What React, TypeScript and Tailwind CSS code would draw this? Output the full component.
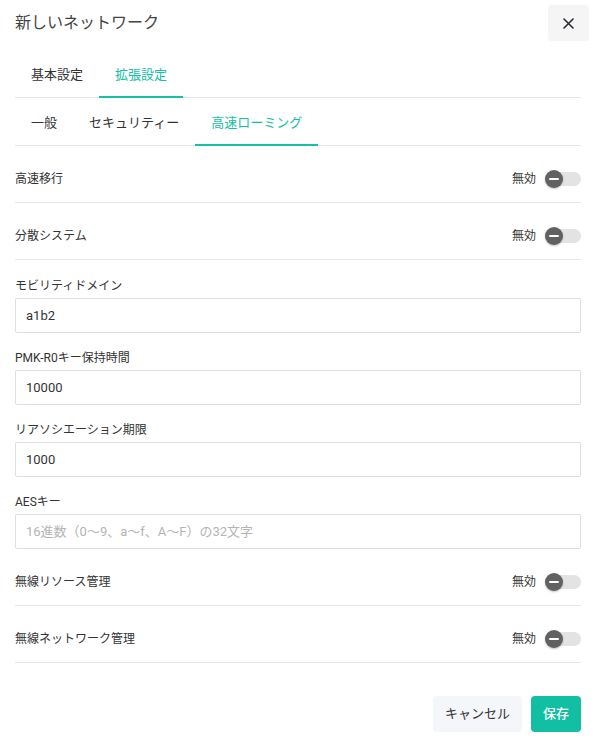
const FONT = { fontFamily: 'Roboto, "Noto Sans CJK JP", "Noto Sans", sans-serif' };

const TOP_TABS = ['基本設定', '拡張設定'];
const SUB_TABS = ['一般', 'セキュリティー', '高速ローミング'];

const Tabs = ({ items, active }: { items: string[]; active: number }) => (
  <div className="flex border-b border-[#e4e7ed]">
    {items.map((t, i) => (
      <div
        key={t}
        className={`-mb-px px-4 pt-[15px] pb-[11px] text-[13px] leading-[20px] border-b-2 ${
          i === active ? 'border-[#14c1a5] text-[#14c1a5]' : 'border-transparent text-[#333]'
        }`}
      >
        {t}
      </div>
    ))}
  </div>
);

const Toggle = () => (
  <div className="flex items-center gap-[9px]">
    <span className="text-[12px] text-[#333]">無効</span>
    <div className="relative w-[36px] h-[18px]">
      <div className="absolute left-[2px] right-0 top-[2px] h-[14px] rounded-full bg-[#e3e3e3]" />
      <div className="absolute left-0 top-0 w-[18px] h-[18px] rounded-full bg-[#616161] shadow-[0_1px_2px_rgba(0,0,0,0.25)] flex items-center justify-center">
        <div className="w-[10px] h-[2px] bg-white rounded-full" />
      </div>
    </div>
  </div>
);

const ToggleRow = ({ label }: { label: string }) => (
  <div className="flex items-center justify-between pt-[23px] pb-[13px] border-b border-[#e4e7ed]">
    <span className="text-[12px] leading-[20px] text-[#333]">{label}</span>
    <Toggle />
  </div>
);

const Field = ({ label, value, placeholder }: { label: string; value?: string; placeholder?: string }) => (
  <div className="mb-[17px]">
    <div className="text-[12px] leading-[16px] text-[#333] mb-[4px]">{label}</div>
    <input
      readOnly
      value={value ?? ''}
      placeholder={placeholder}
      className="w-full h-[35px] px-[10px] text-[13px] text-[#333] border border-[#dcdfe6] rounded-[2px] outline-none placeholder:text-[#b4b4b4]"
      style={FONT}
    />
  </div>
);

export default function App() {
  return (
    <div className="w-[594px] h-[745px] bg-white" style={FONT}>
      <div className="flex items-center justify-between pl-[15px] pr-[5px] pt-[5px] pb-[9px]">
        <span className="text-[16px] text-[#444]">新しいネットワーク</span>
        <button className="w-[41px] h-[36px] rounded-[4px] bg-[#f5f5f5] flex items-center justify-center">
          <svg width="11" height="11" viewBox="0 0 11 11" fill="none" stroke="#2b2b33" strokeWidth="1.6" strokeLinecap="round">
            <path d="M1 1L10 10M10 1L1 10" />
          </svg>
        </button>
      </div>
      <div className="pl-[15px] pr-[13px]">
        <Tabs items={TOP_TABS} active={1} />
        <Tabs items={SUB_TABS} active={2} />
        <ToggleRow label="高速移行" />
        <ToggleRow label="分散システム" />
        <div className="pt-[18px]">
          <Field label="モビリティドメイン" value="a1b2" />
          <Field label="PMK-R0キー保持時間" value="10000" />
          <Field label="リアソシエーション期限" value="1000" />
          <div>
            <div className="text-[12px] leading-[16px] text-[#333] mb-[4px]">AESキー</div>
            <input
              readOnly
              placeholder="16進数（0〜9、a〜f、A〜F）の32文字"
              className="w-full h-[35px] px-[10px] text-[13px] text-[#333] border border-[#dcdfe6] rounded-[2px] outline-none placeholder:text-[#b4b4b4]"
              style={FONT}
            />
          </div>
        </div>
        <ToggleRow label="無線リソース管理" />
        <ToggleRow label="無線ネットワーク管理" />
        <div className="flex justify-end gap-[9px] mt-[33px]">
          <button className="h-[36px] px-3 rounded-[4px] bg-[#f4f6fa] text-[13px] text-[#333]">キャンセル</button>
          <button className="h-[36px] px-3 rounded-[4px] bg-[#13bfa3] text-[13px] font-medium text-white">保存</button>
        </div>
      </div>
    </div>
  );
}
